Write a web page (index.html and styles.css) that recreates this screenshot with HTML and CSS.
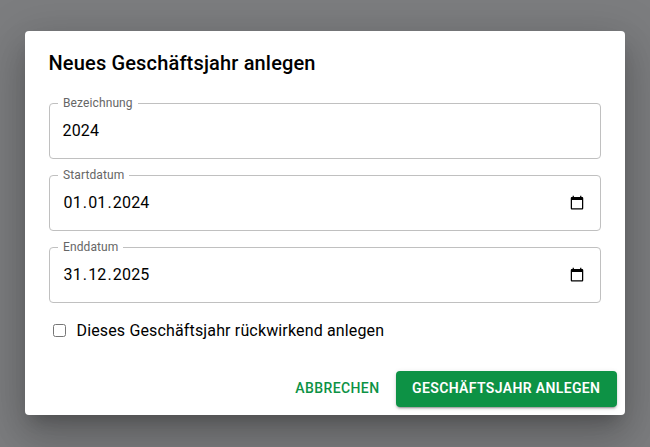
FILE: index.html
```html
<!DOCTYPE html>
<html lang="de">
<head>
<meta charset="utf-8">
<title>Neues Geschäftsjahr anlegen</title>
<link rel="stylesheet" href="styles.css">
</head>
<body>
<main class="dialog">
  <h2 class="title">Neues Geschäftsjahr anlegen</h2>
  <div class="content">
    <fieldset class="field"><legend>Bezeichnung</legend><span class="value">2024</span></fieldset>
    <fieldset class="field"><legend>Startdatum</legend><span class="value"><span class="part">01</span>.<span class="part">01</span>.<span class="part">2024</span></span>
      <svg class="calendar" viewBox="0 0 24 24"><path d="M20 3h-1V1h-2v2H7V1H5v2H4c-1.1 0-2 .9-2 2v16c0 1.1.9 2 2 2h16c1.1 0 2-.9 2-2V5c0-1.1-.9-2-2-2zm0 18H4V8h16v13z"/></svg>
    </fieldset>
    <fieldset class="field"><legend>Enddatum</legend><span class="value"><span class="part">31</span>.<span class="part">12</span>.<span class="part">2025</span></span>
      <svg class="calendar" viewBox="0 0 24 24"><path d="M20 3h-1V1h-2v2H7V1H5v2H4c-1.1 0-2 .9-2 2v16c0 1.1.9 2 2 2h16c1.1 0 2-.9 2-2V5c0-1.1-.9-2-2-2zm0 18H4V8h16v13z"/></svg>
    </fieldset>
    <label class="check"><input type="checkbox"><span>Dieses Geschäftsjahr rückwirkend anlegen</span></label>
  </div>
  <div class="actions">
    <button class="button text">Abbrechen</button>
    <button class="button contained">Geschäftsjahr anlegen</button>
  </div>
</main>
</body>
</html>
```
FILE: styles.css
```css
* { box-sizing: border-box; }
body {
  margin: 0;
  height: 447px;
  padding: 31px 25px 0;
  overflow: hidden;
  background: #7c7d7f;
  font-family: Roboto, sans-serif;
  color: #000;
}
.dialog {
  width: 600px;
  height: 384px;
  background: #fff;
  border-radius: 4px;
  box-shadow: 0 11px 15px -7px rgba(0,0,0,.2), 0 24px 38px 3px rgba(0,0,0,.14), 0 9px 46px 8px rgba(0,0,0,.12);
}
.title {
  margin: 0;
  padding: 16px 24px 16px 23.5px;
  font-size: 20px;
  font-weight: 500;
  line-height: 32px;
  letter-spacing: .16px;
}
.content { padding: 3px 24px 0; }
.field {
  display: flex;
  align-items: center;
  justify-content: space-between;
  width: 552px;
  height: 61px;
  margin: 0 0 11px;
  padding: 0 15px 6px 8px;
  border: 1px solid #c0c0c0;
  border-radius: 4px;
}
.field legend {
  height: 11px;
  padding: 0 5px;
  font-size: 12px;
  line-height: 11px;
  letter-spacing: .11px;
  color: #666;
}
.value { padding-left: 4.5px; font-size: 16px; line-height: 23px; letter-spacing: .15px; }
.part { padding: 0 1px; }
.calendar { width: 16px; height: 15px; }
.check {
  display: flex;
  align-items: center;
  height: 24px;
  padding-left: 4px;
  margin-top: 15px;
  font-size: 16px;
  letter-spacing: .15px;
}
.check input { width: 13px; height: 13px; margin: 0 10.5px 0 0; }
.actions { display: flex; justify-content: flex-end; gap: 8px; padding: 29px 8px 8px; }
.button {
  height: 36px;
  border: 0;
  border-radius: 4px;
  font: 500 14px/22px Roboto, sans-serif;
  letter-spacing: .4px;
  text-transform: uppercase;
}
.text { padding: 6px 8.5px 8px 8px; background: none; color: #0d9245; }
.contained {
  width: 221px;
  padding: 6px 15.5px 8px 15px;
  background: #0d9245;
  color: #fff;
  font-weight: 600;
  letter-spacing: .36px;
  white-space: nowrap;
  box-shadow: 0 3px 1px -2px rgba(0,0,0,.2), 0 2px 2px rgba(0,0,0,.14), 0 1px 5px rgba(0,0,0,.12);
}
```
